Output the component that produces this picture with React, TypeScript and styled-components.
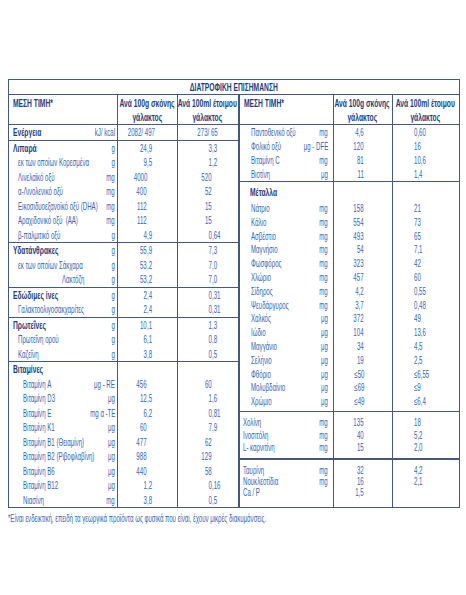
import styled, { createGlobalStyle } from 'styled-components';

// the label is printed in a very narrow type, so every text run is squeezed
const SX = 0.58;
const BOLD_SX = 0.64;
const INK = '#3166b8';
const NAVY = '#1c3c7e';
const RULE = '#43587b';

type Line = { label: string; unit?: string; a?: string; b?: string; head?: boolean; indent?: number };
type Group = { rows: Line[]; h: number; headH?: number; indent: number; top?: number; bottom?: number; rule?: number };

const LEFT: Group[] = [
  { h: 14.5, indent: 9, rows: [{ label: 'Ενέργεια', head: true, unit: 'kJ/ kcal', a: '2082/ 497', b: '273/ 65' }] },
  {
    h: 14.5,
    indent: 9,
    rows: [
      { label: 'Λιπαρά', head: true, unit: 'g', a: '24,9', b: '3,3' },
      { label: 'εκ των οποίων Κορεσμένα', unit: 'g', a: '9,5', b: '1,2' },
      { label: 'Λινελαϊκό οξύ', unit: 'mg', a: '4000', b: '520' },
      { label: 'α-Λινολενικό οξύ', unit: 'mg', a: '400', b: '52' },
      { label: 'Εικοσιδυοεξανοϊκό οξύ (DHA)', unit: 'mg', a: '112', b: '15' },
      { label: 'Αραχιδονικό οξύ\u00a0 (AA)', unit: 'mg', a: '112', b: '15' },
      { label: 'β-παλμιτικό οξύ', unit: 'g', a: '4,9', b: '0,64' },
    ],
  },
  {
    h: 14.5,
    indent: 9,
    rows: [
      { label: 'Υδατάνθρακες', head: true, unit: 'g', a: '55,9', b: '7,3' },
      { label: 'εκ των οποίων Σάκχαρα', unit: 'g', a: '53,2', b: '7,0' },
      { label: 'Λακτόζη', unit: 'g', a: '53,2', b: '7,0', indent: 53 },
    ],
  },
  {
    h: 14.5,
    indent: 9,
    rows: [
      { label: 'Εδώδιμες ίνες', head: true, unit: 'g', a: '2,4', b: '0,31' },
      { label: 'Γαλακτοολιγοσακχαρίτες', unit: 'g', a: '2,4', b: '0,31' },
    ],
  },
  {
    h: 14.5,
    indent: 9,
    rows: [
      { label: 'Πρωτεΐνες', head: true, unit: 'g', a: '10,1', b: '1,3' },
      { label: 'Πρωτεΐνη ορού', unit: 'g', a: '6,1', b: '0,8' },
      { label: 'Καζεΐνη', unit: 'g', a: '3,8', b: '0,5' },
    ],
  },
  {
    h: 14.5,
    indent: 14,
    rows: [
      { label: 'Βιταμίνες', head: true },
      { label: 'Βιταμίνη A', unit: 'μg - RE', a: '456', b: '60' },
      { label: 'Βιταμίνη D3', unit: 'μg', a: '12,5', b: '1,6' },
      { label: 'Βιταμίνη E', unit: 'mg α -TE', a: '6,2', b: '0,81' },
      { label: 'Βιταμίνη K1', unit: 'μg', a: '60', b: '7,9' },
      { label: 'Βιταμίνη B1 (Θειαμίνη)', unit: 'μg', a: '477', b: '62' },
      { label: 'Βιταμίνη B2 (Ριβοφλαβίνη)', unit: 'μg', a: '988', b: '129' },
      { label: 'Βιταμίνη B6', unit: 'μg', a: '440', b: '58' },
      { label: 'Βιταμίνη B12', unit: 'μg', a: '1,2', b: '0,16' },
      { label: 'Νιασίνη', unit: 'mg', a: '3,8', b: '0,5' },
    ],
  },
];

const RIGHT: Group[] = [
  {
    h: 14,
    indent: 11,
    rows: [
      { label: 'Παντοθενικό οξύ', unit: 'mg', a: '4,6', b: '0,60' },
      { label: 'Φολικό οξύ', unit: 'μg - DFE', a: '120', b: '16' },
      { label: 'Βιταμίνη C', unit: 'mg', a: '81', b: '10,6' },
      { label: 'Βιοτίνη', unit: 'μg', a: '11', b: '1,4' },
    ],
  },
  {
    h: 13.8,
    headH: 20,
    indent: 11,
    bottom: 2,
    rows: [
      { label: 'Μέταλλα', head: true },
      { label: 'Νάτριο', unit: 'mg', a: '158', b: '21' },
      { label: 'Κάλιο', unit: 'mg', a: '554', b: '73' },
      { label: 'Ασβέστιο', unit: 'mg', a: '493', b: '65' },
      { label: 'Μαγνήσιο', unit: 'mg', a: '54', b: '7,1' },
      { label: 'Φωσφόρος', unit: 'mg', a: '323', b: '42' },
      { label: 'Χλώριο', unit: 'mg', a: '457', b: '60' },
      { label: 'Σίδηρος', unit: 'mg', a: '4,2', b: '0,55' },
      { label: 'Ψευδάργυρος', unit: 'mg', a: '3,7', b: '0,48' },
      { label: 'Χαλκός', unit: 'μg', a: '372', b: '49' },
      { label: 'Ιώδιο', unit: 'μg', a: '104', b: '13,6' },
      { label: 'Μαγγάνιο', unit: 'μg', a: '34', b: '4,5' },
      { label: 'Σελήνιο', unit: 'μg', a: '19', b: '2,5' },
      { label: 'Φθόριο', unit: 'μg', a: '≤50', b: '≤6,55' },
      { label: 'Μολυβδαίνιο', unit: 'μg', a: '≤69', b: '≤9' },
      { label: 'Χρώμιο', unit: 'μg', a: '≤49', b: '≤6,4' },
    ],
  },
  {
    h: 12.5,
    indent: 3,
    top: 4.5,
    bottom: 4,
    rule: 2,
    rows: [
      { label: 'Χολίνη', unit: 'mg', a: '135', b: '18' },
      { label: 'Ινοσιτόλη', unit: 'mg', a: '40', b: '5,2' },
      { label: 'L- καρνιτίνη', unit: 'mg', a: '15', b: '2,0' },
    ],
  },
  {
    h: 11,
    indent: 3,
    top: 5.5,
    rows: [
      { label: 'Ταυρίνη', unit: 'mg', a: '32', b: '4,2' },
      { label: 'Νουκλεοτίδια', unit: 'mg', a: '16', b: '2,1' },
      { label: 'Ca / P', a: '1,5' },
    ],
  },
];

const GlobalStyle = createGlobalStyle`
  html, body {
    margin: 0;
    padding: 0;
    background: #ffffff;
  }
  body {
    font-family: 'Liberation Sans', Arial, sans-serif;
    font-size: 10.5px;
    color: ${INK};
    overflow: hidden;
  }
`;

const Page = styled.div`
  padding: 79px 0 0 8px;
`;

const Sheet = styled.div`
  width: 452px;
  box-sizing: border-box;
  border: 1px solid ${RULE};
`;

const Txt = styled.span<{ $origin?: 'left' | 'right' | 'center'; $bold?: boolean }>`
  display: inline-block;
  white-space: nowrap;
  transform: scaleX(${(p) => (p.$bold ? BOLD_SX : SX)});
  transform-origin: ${(p) => p.$origin ?? 'left'} center;
`;

const Title = styled.div`
  height: 14px;
  line-height: 14px;
  text-align: center;
  font-weight: 700;
  color: ${NAVY};
  border-bottom: 1px solid ${RULE};
`;

const Halves = styled.div`
  display: flex;
`;

const Half = styled.div<{ $width: number; $lines: number[]; $divider?: boolean }>`
  flex: none;
  display: flex;
  flex-direction: column;
  box-sizing: border-box;
  width: ${(p) => p.$width}px;
  border-right: ${(p) => (p.$divider ? `2px solid ${RULE}` : 'none')};
  background: ${(p) =>
    p.$lines.map((x) => `linear-gradient(${RULE}, ${RULE}) ${x}px 0 / 1px 100% no-repeat`).join(', ')};
`;

const Head = styled.div<{ $cols: string }>`
  display: grid;
  grid-template-columns: ${(p) => p.$cols};
  height: 30px;
  box-sizing: border-box;
  padding-top: 1px;
  border-bottom: 1px solid ${RULE};
  font-weight: 700;
  color: ${NAVY};
  line-height: 14px;
`;

const HeadLabel = styled.div<{ $indent: number }>`
  grid-column: span 2;
  padding-left: ${(p) => p.$indent}px;
`;

const HeadValue = styled.div`
  display: flex;
  flex-direction: column;
  align-items: center;
`;

const Section = styled.div<{ $top?: number; $bottom?: number; $rule?: number }>`
  padding: ${(p) => p.$top ?? 0}px 0 ${(p) => p.$bottom ?? 0}px;
  border-bottom: ${(p) => p.$rule ?? 1}px solid ${RULE};

  &:last-child {
    border-bottom: none;
    flex-grow: 1;
  }
`;

const RowGrid = styled.div<{ $cols: string; $h: number }>`
  display: grid;
  grid-template-columns: ${(p) => p.$cols};
  height: ${(p) => p.$h}px;
  line-height: ${(p) => p.$h}px;
  white-space: nowrap;
`;

const Label = styled.div<{ $indent: number; $head?: boolean }>`
  min-width: 0;
  padding-left: ${(p) => p.$indent}px;
  font-weight: ${(p) => (p.$head ? 700 : 400)};
  color: ${(p) => (p.$head ? NAVY : INK)};
`;

const Unit = styled.div<{ $pad: number }>`
  text-align: right;
  padding-right: ${(p) => p.$pad}px;
`;

const DecimalCell = styled.div`
  display: flex;
`;

const IntPart = styled.div<{ $w: number }>`
  flex: none;
  width: ${(p) => p.$w}px;
  text-align: right;
`;

const Centered = styled.div<{ $shift: number }>`
  text-align: center;
  padding-right: ${(p) => p.$shift}px;
`;

const Plain = styled.div<{ $align: 'left' | 'right'; $pad: number }>`
  text-align: ${(p) => p.$align};
  padding-${(p) => p.$align}: ${(p) => p.$pad}px;
`;

const Note = styled.div`
  margin-top: 3px;
  line-height: 14px;
`;

type Side = {
  cols: string;
  lines: number[];
  width: number;
  headIndent: number;
  titleIndent: number;
  unitPad: number;
  decimal: boolean;
};

const LEFT_SIDE: Side = {
  cols: 'minmax(0, 1fr) auto 60px 61px',
  lines: [108, 168],
  width: 231,
  headIndent: 4,
  titleIndent: 4,
  unitPad: 2,
  decimal: true,
};

const RIGHT_SIDE: Side = {
  cols: 'minmax(0, 1fr) auto 59px 67px',
  lines: [93, 152],
  width: 219,
  headIndent: 10,
  titleIndent: 4,
  unitPad: 5,
  decimal: false,
};

function Decimal({ v, at, shift }: { v?: string; at: number; shift: number }) {
  if (!v) return <div />;
  if (v.includes('/'))
    return (
      <Centered $shift={shift}>
        <Txt $origin="center">{v}</Txt>
      </Centered>
    );
  const [int, frac] = v.split(',');
  return (
    <DecimalCell>
      <IntPart $w={at}>
        <Txt $origin="right">{int}</Txt>
      </IntPart>
      {frac !== undefined && <Txt>,{frac}</Txt>}
    </DecimalCell>
  );
}

function Row({ line, group, side }: { line: Line; group: Group; side: Side }) {
  const h = line.head && group.headH ? group.headH : group.h;
  const indent = line.indent ?? (line.head ? side.headIndent : group.indent);
  return (
    <RowGrid $cols={side.cols} $h={h}>
      <Label $indent={indent} $head={line.head}>
        <Txt $bold={line.head}>{line.label}</Txt>
      </Label>
      <Unit $pad={side.unitPad}>{line.unit && <Txt $origin="right">{line.unit}</Txt>}</Unit>
      {side.decimal ? (
        <>
          <Decimal v={line.a} at={30} shift={12} />
          <Decimal v={line.b} at={35} shift={0} />
        </>
      ) : (
        <>
          <Plain $align="right" $pad={28}>
            {line.a && <Txt $origin="right">{line.a}</Txt>}
          </Plain>
          <Plain $align="left" $pad={22}>
            {line.b && <Txt>{line.b}</Txt>}
          </Plain>
        </>
      )}
    </RowGrid>
  );
}

function Table({ groups, side, divider }: { groups: Group[]; side: Side; divider?: boolean }) {
  return (
    <Half $width={side.width} $lines={side.lines} $divider={divider}>
      <Head $cols={side.cols}>
        <HeadLabel $indent={side.titleIndent}>
          <Txt $bold>ΜΕΣΗ ΤΙΜΗ*</Txt>
        </HeadLabel>
        <HeadValue>
          <Txt $bold $origin="center">Ανά 100g σκόνης</Txt>
          <Txt $bold $origin="center">γάλακτος</Txt>
        </HeadValue>
        <HeadValue>
          <Txt $bold $origin="center">Ανά 100ml έτοιμου</Txt>
          <Txt $bold $origin="center">γάλακτος</Txt>
        </HeadValue>
      </Head>
      {groups.map((g, i) => (
        <Section key={i} $top={g.top} $bottom={g.bottom} $rule={g.rule}>
          {g.rows.map((r) => (
            <Row key={r.label} line={r} group={g} side={side} />
          ))}
        </Section>
      ))}
    </Half>
  );
}

export default function App() {
  return (
    <>
      <GlobalStyle />
      <Page>
        <Sheet>
          <Title>
            <Txt $bold $origin="center">ΔΙΑΤΡΟΦΙΚΗ ΕΠΙΣΗΜΑΝΣΗ</Txt>
          </Title>
          <Halves>
            <Table groups={LEFT} side={LEFT_SIDE} divider />
            <Table groups={RIGHT} side={RIGHT_SIDE} />
          </Halves>
        </Sheet>
        <Note>
          <Txt>*Είναι ενδεικτική, επειδή τα γεωργικά προϊόντα ως φυσικά που είναι, έχουν μικρές διακυμάνσεις.</Txt>
        </Note>
      </Page>
    </>
  );
}
